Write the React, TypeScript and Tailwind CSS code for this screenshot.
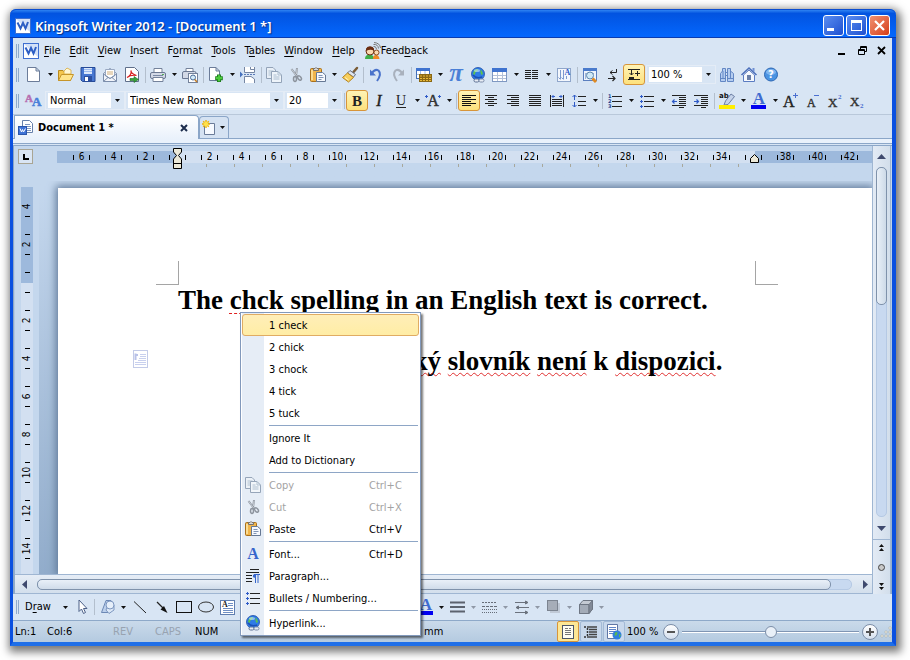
import { useState, type ReactNode } from 'react';
import clsx from 'clsx';

const serif = 'Liberation Serif';

const Globe = () => (
  <>
    <circle cx="8" cy="7" r="6.5" fill="#2f7be6" stroke="#1d4da6" strokeWidth=".8" />
    <path d="M4 3.5Q6 1.5 8 2L7.5 4 5.5 5.5 4.5 8 3 7Z M10.5 2.5 12 4 13 7 11.5 8 10.5 6Z" fill="#5cc24f" />
    <path d="M3 8Q6 12 12 10" stroke="#1a50b8" strokeWidth="1.5" fill="none" />
    <ellipse cx="7" cy="3.5" rx="3" ry="1.5" fill="#c9e5ff" opacity=".6" />
    <rect x="4" y="12" width="5" height="3" rx="1.5" fill="#e7ecf4" stroke="#5b6f92" />
    <rect x="9" y="12" width="5" height="3" rx="1.5" fill="#e7ecf4" stroke="#7b8ba8" />
  </>
);

const Sheet = ({ x = 2, y = 1, w = 11, h = 14 }) => (
  <path
    d={`M${x + 0.5} ${y + 0.5}H${x + w - 4}L${x + w - 0.5} ${y + 4}V${y + h - 0.5}H${x + 0.5}Z M${x + w - 4} ${y + 0.5}V${y + 4}H${x + w - 0.5}`}
    fill="#fff"
    stroke="#6b7c99"
  />
);

const Logo = () => (
  <>
    <rect width="16" height="16" fill="#3f6fd0" />
    <rect x="1" y="1" width="14" height="14" fill="#fff" />
    <path d="M1 1H15V14Z" fill="#d3e1f8" />
    <path d="M2.500 4.500 5.500 10.500 8 5 10.500 10.500 13 4" fill="none" stroke="#2e5fc4" strokeWidth="2" />
  </>
);

const bars = (rows: [number, number, number][], color = '#222') =>
  rows.map(([x, y, w], i) => <rect key={i} x={x} y={y} width={w} height="1" fill={color} />);

const Plus = ({ x, y }: { x: number; y: number }) => (
  <path d={`M${x} ${y - 1.5}v3M${x - 1.5} ${y}h3`} stroke="#2f5bc8" />
);

const icons: Record<string, ReactNode> = {
  logo: <Logo />,
  new: <Sheet x={1} y={0} w={13} h={15} />,
  open: (
    <>
      <path d="M.5 13.5V3.5H5L6.5 5H12.5V13.5Z" fill="#f4c64e" stroke="#b98a1e" />
      <path d="M6 4 9 1 13 3V7H6Z" fill="#fff7d6" stroke="#d6a837" strokeWidth=".8" />
      <path d="M.5 13.5 3.5 7.5H15.5L12.5 13.5Z" fill="#ffe48b" stroke="#c6952a" />
    </>
  ),
  save: (
    <>
      <path d="M1 .5H15V14.5H2.5L1 13Z" fill="#4777d2" stroke="#274b97" />
      <rect x="4" y="1" width="8" height="6" fill="#dce8fb" />
      <path d="M4 2.5h8M4 4.5h8" stroke="#9dbbee" />
      <rect x="4" y="9" width="8" height="5" fill="#2c4f9f" />
      <rect x="5" y="10" width="3" height="4" fill="#fff" />
    </>
  ),
  mail: (
    <>
      <path d="M1.5 6.5 8 1.5 14.5 6.5V14.5H1.5Z" fill="#f2f5fb" stroke="#7c8eab" />
      <path d="M3.5 2.5H12.5V9L8 11.5 3.5 9Z" fill="#fff" stroke="#9aa9c2" />
      <path d="M1.5 7 8 11.5 14.5 7M1.5 14.5 6 10.5M14.5 14.5 10 10.5" fill="none" stroke="#7c8eab" />
      <path d="M5 5h6M5 7h6" stroke="#cfae7a" />
    </>
  ),
  pdf: (
    <>
      <path d="M1.5.5H10.5L14.5 4.5V14.5H1.5Z" fill="#fff" stroke="#5f6f8a" />
      <path d="M3 10.5Q8 8 7 3.5Q7 7 12.5 8.5Q7 7.5 3 10.5Z" fill="none" stroke="#d81e1e" strokeWidth="1.2" />
      <path d="M6 11.5H10V9.5L14.5 12.5 10 15.5V13.5H6Z" fill="#38a23c" stroke="#1e6d22" strokeWidth=".6" />
    </>
  ),
  print: (
    <>
      <path d="M4 6V1.5H12V6" fill="#fff" stroke="#74829b" />
      <rect x=".5" y="5.5" width="15" height="6" rx="1.5" fill="#d3d9e6" stroke="#6b7892" />
      <path d="M3 10.5H13V14.5H3Z" fill="#fff" stroke="#74829b" />
      <path d="M3 8.5H13" stroke="#7a88a3" />
      <rect x="12" y="7" width="2" height="1" fill="#54b054" />
    </>
  ),
  preview: (
    <>
      <path d="M4 5V1.5H11V5" fill="#fff" stroke="#74829b" />
      <path d="M.5 6Q.5 4.5 2 4.5H12.5Q14 4.5 14 6V11.5H.5Z" fill="#d3d9e6" stroke="#6b7892" />
      <rect x="6.5" y="6.5" width="9" height="9" fill="#fff" stroke="#74829b" />
      <circle cx="11" cy="10.5" r="2.5" fill="#d4edfb" stroke="#4a6b98" />
      <path d="M12.8 12.5 15 15" stroke="#c17c26" strokeWidth="1.6" />
    </>
  ),
  pageplus: (
    <>
      <Sheet x={1} y={0} w={11} h={14} />
      <path d="M11 7.5V15M7.2 11.2H14.8" stroke="#1c7d1c" strokeWidth="4" />
      <path d="M11 8.3V14.2M8 11.2H14" stroke="#4ccc3c" strokeWidth="2.2" />
    </>
  ),
  pagebreak: (
    <>
      <path d="M4.500 0V5.500H14.500V0M10.500 0V2.500H14.500" fill="#fff" stroke="#7586a3" />
      <path d="M4.500 16V9.500H11L14.500 12V16" fill="#fff" stroke="#7586a3" />
      <path d="M0 4.500 3 7.500 0 10.500Z" fill="#4671bd" />
      <path d="M4 7.500H15" stroke="#5a79b8" strokeDasharray="2 1" />
    </>
  ),
  copy: (
    <g opacity=".75">
      <path d="M.5.500H7L9.500 3V11.500H.5Z" fill="#eef3f8" stroke="#7c8ea5" />
      <path d="M2.500 4h5M2.500 6h3M2.500 8h3" stroke="#9eb3c4" />
      <path d="M5.500 4.500H12L15.500 8V15.500H5.500Z" fill="#f6f9fc" stroke="#7c8ea5" />
      <path d="M12 4.500V8H15.500M7.500 8h3M7.500 10h6M7.500 12h6" stroke="#9eb3c4" fill="none" />
    </g>
  ),
  cut: (
    <g fill="none" stroke="#8d949e">
      <path d="M3.500 2 9.500 10M9 1 8 9" strokeWidth="2" />
      <path d="M3.500 2 8.500 9M9 1.500 8.500 7" stroke="#c6ccd4" />
      <ellipse cx="7" cy="12" rx="1.500" ry="2.400" strokeWidth="1.500" />
      <ellipse cx="11.500" cy="11" rx="1.500" ry="2.400" strokeWidth="1.500" transform="rotate(-40 11.500 11)" />
    </g>
  ),
  paste: (
    <>
      <rect x=".5" y="1.500" width="11" height="13" rx="1" fill="#f1b54b" stroke="#a8701c" />
      <path d="M2 3V13" stroke="#fbdc92" strokeWidth="2" />
      <path d="M3.500 3.500V1.500H5Q6-.5 7 1.500H8.500V3.500Z" fill="#d8d8d8" stroke="#77716a" />
      <path d="M6.500 5.500H12.500L15.500 8V14.500H6.500Z" fill="#f6f9fe" stroke="#667894" />
      <path d="M8.500 8.500h4M8.500 10.500h5M8.500 12.500h3" stroke="#8195b5" />
    </>
  ),
  brush: (
    <>
      <path d="M15 1 11.500 5" stroke="#7b5c36" strokeWidth="2.500" strokeLinecap="round" />
      <path d="M8 3.500 13.500 7.500 11.500 10 5.500 6Z" fill="#dfe4ec" stroke="#646e80" />
      <path d="M5.500 6 11.500 10.500 6.500 15 .5 10.500Z" fill="#f8cf5b" stroke="#b48322" />
      <path d="M3 10.500 6.500 13" stroke="#fff1b8" />
    </>
  ),
  undo: (
    <>
      <path d="M4 6Q7 1.500 10.500 3.500 14 7 9 14" fill="none" stroke="#4a73cb" strokeWidth="2" />
      <path d="M2 2.500V8.500H8Z" fill="#4a73cb" />
    </>
  ),
  redo: (
    <>
      <path d="M12 6Q9 1.500 5.500 3.500 2 7 7 14" fill="none" stroke="#a9b1bd" strokeWidth="2" />
      <path d="M14 2.500V8.500H8Z" fill="#a9b1bd" />
    </>
  ),
  goldtable: (
    <>
      <rect x=".5" y="1.500" width="13" height="10" fill="#fff" stroke="#4470b8" />
      <rect x="0" y="1" width="14" height="3" fill="#3f73cf" />
      <path d="M4.500 4V11M9 4V11M1 7.500H13" stroke="#a6bfe4" />
      <rect x="3" y="7" width="13" height="8" fill="#8a6814" />
      <path d="M4 9h11M4 11.500h11M4 13.500h11" stroke="#e9b93a" strokeDasharray="2 1" />
    </>
  ),
  pi: (
    <text x="8" y="14" textAnchor="middle" fontFamily={serif} fontWeight="bold" fontStyle="italic" fontSize="25" fill="#4a7fd6">π</text>
  ),
  globe: <Globe />,
  table: (
    <>
      <rect x=".5" y="1.500" width="14" height="13" fill="#fff" stroke="#7f98c2" />
      <rect x="0" y="1" width="15" height="4" fill="#3f73cf" />
      <path d="M5.500 5V14M10.500 5V14M1 8.500H14M1 11.500H14" stroke="#b3c1d8" />
    </>
  ),
  columns: bars([[1, 3, 6], [8, 3, 6], [1, 5, 6], [8, 5, 6], [1, 7, 6], [8, 7, 6], [1, 9, 6], [8, 9, 6], [1, 11, 6], [8, 11, 6]]),
  textdir: (
    <>
      <rect x="1.500" y="1.500" width="13" height="13" fill="#f3f7fd" stroke="#8fa6cb" />
      <path d="M4.500 3V12M7.500 3V12M10.500 9V12M2.500 10.500 4.500 12.500M5.500 10.500 7.500 12.500" stroke="#7c9ad0" fill="none" />
      <text x="11.500" y="8" textAnchor="middle" fontFamily={serif} fontWeight="bold" fontSize="8" fill="#2f5bc8">A</text>
    </>
  ),
  research: (
    <>
      <rect x="1.500" y="1.500" width="13" height="12" fill="#eef4fc" stroke="#5b7fbf" />
      <rect x="1" y="1" width="14" height="3" fill="#4a7bcc" />
      <path d="M3.500 6V12M3 6.500h9" stroke="#9fb5d8" />
      <circle cx="8" cy="8.500" r="3.500" fill="#cfe9f7" stroke="#5d87ae" />
      <path d="M10.500 11.500 14 15" stroke="#e08a22" strokeWidth="3" />
    </>
  ),
  marks: (
    <g fill="none" stroke="#222">
      <path d="M12.500 2V5.500H6M8.500 3.500 6 5.500 8.500 7.500" />
      <path d="M4 11.500H11M8.500 9 11 11.500 8.500 14" strokeWidth="1.200" />
    </g>
  ),
  rulers: (
    <>
      <path d="M2 2.500H14M2 12.500H14" stroke="#222" />
      <path d="M5.500 3V8M3.500 6 5.500 8 7.500 6M11.500 4V9M9 6.500H14" stroke="#222" fill="none" />
      <rect x="3" y="10" width="5" height="2" fill="#222" />
    </>
  ),
  find: (
    <g fill="#b5cdf0" stroke="#6387c4">
      <path d="M1.500 14.500V6.500L3.500 4V1.500H6.500V14.500ZM8.500 14.500V1.500H11.500V4L14.500 6.500V14.500Z" />
      <path d="M6.500 5.500h2M6.500 8.500h2M1.500 11.500h5M8.500 11.500h6M4 4V11M11.500 4V11" />
    </g>
  ),
  home: (
    <>
      <path d="M2.500 8V14.500H13.500V8L8 3Z" fill="#f5f8fd" stroke="#5b7cc2" />
      <path d="M11.500 1h2V5l-2-2Z" fill="#6e8fd3" />
      <path d="M.5 8 8 1 15.500 8" fill="none" stroke="#4d70bb" strokeWidth="1.600" />
      <rect x="6" y="8" width="4" height="5" fill="#6a7fa8" />
    </>
  ),
  help: (
    <>
      <circle cx="8" cy="7.500" r="6.500" fill="#4a93e2" stroke="#2c67b4" />
      <ellipse cx="8" cy="5" rx="5" ry="3" fill="#7fb6f0" />
      <text x="8" y="11" textAnchor="middle" fontFamily="DejaVu Sans" fontWeight="bold" fontSize="10" fill="#fff">?</text>
    </>
  ),
  styles: (
    <g fontFamily={serif} fontWeight="bold" strokeWidth=".5">
      <text x="-1" y="9" fontSize="11" fill="#b76fb2" stroke="#b76fb2">A</text>
      <text x="6" y="13" fontSize="13" fill="#4a80d9" stroke="#4a80d9">A</text>
    </g>
  ),
  bold: <text x="8" y="13" textAnchor="middle" fontFamily={serif} fontWeight="bold" fontSize="15" fill="#222">B</text>,
  italic: <text x="8" y="13" textAnchor="middle" fontFamily={serif} fontStyle="italic" fontSize="16" stroke="#222" strokeWidth=".4" fill="#222">I</text>,
  underline: (
    <>
      <text x="8" y="12" textAnchor="middle" fontFamily={serif} fontSize="14" fill="#222">U</text>
      <rect x="3" y="14" width="10" height="1" fill="#222" />
    </>
  ),
  scale: (
    <>
      <text x="8" y="13" textAnchor="middle" fontFamily={serif} fontSize="16" stroke="#333" strokeWidth=".5" fill="#333">A</text>
      <Plus x={1.5} y={3.5} />
      <Plus x={14.5} y={3.5} />
    </>
  ),
  left: bars([[1, 2, 14], [1, 4, 9], [1, 6, 14], [1, 8, 9], [1, 10, 14], [1, 12, 9]], '#111'),
  center: bars([[2, 2, 12], [5, 4, 6], [2, 6, 12], [5, 8, 6], [2, 10, 12], [5, 12, 6]]),
  right: bars([[2, 2, 12], [6, 4, 8], [2, 6, 12], [6, 8, 8], [2, 10, 12], [6, 12, 8]]),
  justify: bars([[2, 2, 12], [2, 4, 12], [2, 6, 12], [2, 8, 12], [2, 10, 12], [2, 12, 12]]),
  distribute: (
    <>
      {bars([[3, 6, 10], [3, 8, 10], [3, 10, 10], [3, 12, 10]])}
      <path d="M1.500 2V14M14.500 2V14" stroke="#222" />
      <path d="M3 3.500H6M10 3.500H13M4.500 2 3 3.500 4.500 5M11.500 2 13 3.500 11.500 5" stroke="#2f5bc8" fill="none" />
    </>
  ),
  spacing: (
    <>
      {bars([[7, 3, 8], [7, 8, 8], [7, 12, 8]])}
      <path d="M3.500 2V7M3.500 9V14M1.500 4 3.500 2 5.500 4M1.500 12 3.500 14 5.500 12" stroke="#2f5bc8" fill="none" />
    </>
  ),
  numbers: (
    <>
      {bars([[5, 3, 10], [5, 8, 10], [5, 13, 10]])}
      <g fontFamily="DejaVu Sans" fontWeight="bold" fontSize="5" fill="#23408f">
        <text x="1" y="5">1</text>
        <text x="1" y="10">2</text>
        <text x="1" y="15">3</text>
      </g>
    </>
  ),
  bullets: (
    <>
      {bars([[5, 3, 10], [5, 8, 10], [5, 13, 10]])}
      <Plus x={2.5} y={3.5} />
      <Plus x={2.5} y={8.5} />
      <Plus x={2.5} y={13.5} />
    </>
  ),
  outdent: (
    <>
      {bars([[1, 2, 14], [8, 4, 7], [8, 6, 7], [8, 8, 7], [8, 10, 7], [1, 12, 14], [8, 14, 5]])}
      <path d="M1 8.500H6M3.500 6.500 1.500 8.500 3.500 10.500" stroke="#2f5bc8" strokeWidth="1.200" fill="none" />
    </>
  ),
  indent: (
    <>
      {bars([[1, 2, 14], [8, 4, 7], [8, 6, 7], [8, 8, 7], [8, 10, 7], [1, 12, 14], [8, 14, 5]])}
      <path d="M1 8.500H6M3.500 6.500 5.500 8.500 3.500 10.500" stroke="#2f5bc8" strokeWidth="1.200" fill="none" />
    </>
  ),
  highlight: (
    <>
      <text x="0" y="5" fontFamily="DejaVu Sans" fontWeight="bold" fontSize="7" fill="#111">ab</text>
      <path d="M12 1 15.500 3.500 9 11.500 5 12 6.500 8Z" fill="#c6d4ea" stroke="#6c7fa5" />
      <rect x="0" y="12" width="16" height="4" fill="#ffee00" />
    </>
  ),
  fontcolor: (
    <>
      <text x="8" y="11" textAnchor="middle" fontFamily={serif} fontWeight="bold" fontSize="17" fill="#3f6bd0">A</text>
      <rect x="0" y="12" width="15" height="4" fill="#0000f0" />
    </>
  ),
  grow: (
    <>
      <text x="0" y="14" fontFamily={serif} fontSize="16" stroke="#222" strokeWidth=".4" fill="#222">A</text>
      <path d="M12.500 0V5M10 2.500H15" stroke="#4a6fd0" />
    </>
  ),
  shrink: (
    <>
      <text x="2" y="14" fontFamily={serif} fontSize="12" stroke="#333" strokeWidth=".4" fill="#333">A</text>
      <path d="M9 2.500H14" stroke="#4a6fd0" />
    </>
  ),
  sup: (
    <g fontFamily={serif}>
      <text x="1" y="14" fontSize="13" stroke="#333" strokeWidth=".4" fill="#333">X</text>
      <text x="11" y="6" fontSize="7" fontWeight="bold" fill="#4a6fd0">2</text>
    </g>
  ),
  sub: (
    <g fontFamily={serif}>
      <text x="1" y="13" fontSize="13" stroke="#333" strokeWidth=".4" fill="#333">X</text>
      <text x="11" y="15" fontSize="7" fontWeight="bold" fill="#4a6fd0">2</text>
    </g>
  ),
  pointer: <path d="M5 1V12.500L7.500 10 9.500 14.500 11.500 13.500 9.500 9.500H13Z" fill="#fff" stroke="#4b5f87" />,
  shapes: (
    <>
      <path d="M6 1.500H11L8 13.500H1.500Z" fill="#bcd0ec" stroke="#6c88b5" />
      <path d="M9 4 14 6V11L9 14.500 6 11Z" fill="#dce8f7" stroke="#7d97c0" />
      <circle cx="10" cy="6" r="4" fill="#e6effa" stroke="#7d97c0" />
    </>
  ),
  line: <path d="M2 2.500 14 14" stroke="#222" />,
  arrow: (
    <>
      <path d="M3 3 10 10" stroke="#222" strokeWidth="1.300" />
      <path d="M13.500 14 6.500 10.500 10 7Z" fill="#111" />
    </>
  ),
  rect: <rect x=".5" y="2.500" width="15" height="11" fill="none" stroke="#111" />,
  ellipse: <ellipse cx="8" cy="8" rx="7.500" ry="5" fill="none" stroke="#333" />,
  textbox: (
    <>
      <rect x=".5" y="1.500" width="14" height="14" fill="#fff" stroke="#5f7eb0" />
      <text x="2" y="8" fontFamily={serif} fontWeight="bold" fontSize="8" fill="#222">A</text>
      {bars([[8, 4, 5], [8, 6, 5], [3, 9, 10], [3, 11, 10], [3, 13, 10]], '#6f8fc4')}
    </>
  ),
  weight: <path d="M0 3.500H15M0 8H15M0 12.500H15" stroke="#5c636e" strokeWidth="2" />,
  dash: (
    <g stroke="#666d78">
      <path d="M0 3.500H15" strokeDasharray="2 1" />
      <path d="M0 7.500H15" strokeDasharray="3 1" />
      <path d="M0 10.500H15M0 13.500H15" strokeDasharray="1 1" />
    </g>
  ),
  arrows: (
    <g stroke="#6b727d" fill="none">
      <path d="M1 3.500H14M2 8.500H15M1 13.500H14" />
      <path d="M11.500 2 14 3.500 11.500 5ZM4.500 7 2 8.500 4.500 10ZM11.500 12 14 13.500 11.500 15Z" fill="#6b727d" />
    </g>
  ),
  shadow: (
    <>
      <rect x="4" y="4" width="10" height="10" fill="#c0c9d6" />
      <rect x="1.500" y="1.500" width="10" height="10" fill="#a6adb8" stroke="#7c8490" />
    </>
  ),
  cube: (
    <g stroke="#6e7683">
      <path d="M1.500 5.500 5 1.500H14.500V10L11 14.500H1.500Z" fill="#c4cad3" />
      <path d="M1.500 5.500H11V14.500H1.500Z" fill="#a3abb7" />
      <path d="M11 5.500 14.500 1.500V10L11 14.500Z" fill="#828a97" />
    </g>
  ),
  font: <text x="8" y="13" textAnchor="middle" fontFamily={serif} fontWeight="bold" fontSize="16" fill="#3766cc">A</text>,
  paragraph: (
    <>
      {bars([[5, 1, 9], [1, 4, 13], [1, 7, 6], [1, 10, 6], [1, 13, 6]])}
      <path d="M10.500 6V15M13 6V15M9 6.500H15" stroke="#3766cc" />
      <circle cx="9.500" cy="8" r="1.700" fill="#3766cc" />
    </>
  ),
  pageview: (
    <>
      <rect x="2.500" y="1.500" width="11" height="13" fill="#fffdf0" stroke="#4c5666" />
      {bars([[5, 4, 3], [9, 4, 2], [5, 6, 6], [5, 8, 6], [5, 10, 6]], '#777')}
    </>
  ),
  outline: (
    <>
      <path d="M4 3H14M6 5.500H14M6 8H14M6 10.500H14M4 13H14" stroke="#444" strokeWidth="1.300" />
      <path d="M1 3h2M1 13h2M4.500 4V12" stroke="#333" strokeWidth="1.500" strokeDasharray="2 1" />
    </>
  ),
  webview: (
    <>
      <path d="M1.500.500H11.500V14.500H1.500Z" fill="#fff" stroke="#5f77a5" />
      {bars([[3, 3, 7], [3, 5, 7], [3, 7, 7], [3, 9, 4]], '#5f86c8')}
      <circle cx="11" cy="11" r="4.500" fill="#2f7fe0" />
      <path d="M9 8.500 11.500 8 11 11 8.500 12ZM13 10l2 1-2 3Z" fill="#59b950" />
    </>
  ),
  feedback: (
    <>
      <path d="M0 16Q0 11.500 4.500 11.500T9 16Z" fill="#3fae49" />
      <path d="M8 16Q8 12 11 12T14.500 16Z" fill="#f08a24" />
      <circle cx="5" cy="8" r="4" fill="#fbd9b0" stroke="#6b2d12" />
      <path d="M1 8Q1 3 5 3.500 9 3 9 8 6 5.500 1 8Z" fill="#6b2d12" />
      <circle cx="11.500" cy="9.500" r="2.500" fill="#fbd9b0" stroke="#8a4a1e" />
      <path d="M8.500 3.500Q11 3 11.500 6M8.500 1.500Q13 1 13.500 5.500M9-.5Q15 0 15.500 5" stroke="#777" fill="none" />
    </>
  ),
  doctab: (
    <>
      <path d="M4.500.500H11.500L14.500 3.500V12.500H4.500Z" fill="#fff" stroke="#6680ab" />
      {bars([[7, 4, 5], [7, 6, 6], [7, 8, 6], [9, 10, 4]], '#7f97c0')}
      <rect x=".5" y="6.500" width="8" height="8" fill="#3f73d6" stroke="#2b56ab" />
      <path d="M2 8.500 3.500 12 4.500 9.500 5.500 12 7.500 8.500" stroke="#fff" fill="none" />
    </>
  ),
  newtab: (
    <>
      <path d="M2.500 3.500H12.500V14.500H2.500Z" fill="#f7faff" stroke="#6b7c99" />
      <path d="M4 0V8M0 4H8M1.200 1.200 6.800 6.800M6.800 1.200 1.200 6.800" stroke="#f0b400" strokeWidth="1.400" />
      <circle cx="4" cy="4" r="2.200" fill="#ffe14a" />
    </>
  ),
};

const Icon = ({ name }: { name: string }) => (
  <svg width="16" height="16" viewBox="0 0 16 16" className="shrink-0 overflow-visible" aria-hidden="true">
    {icons[name]}
  </svg>
);

const Caret = ({ dim = false }) => (
  <svg width="5" height="3" viewBox="0 0 5 3" className="shrink-0" aria-hidden="true">
    <path d="M0 0H5L2.500 3Z" fill={dim ? '#8f98a6' : '#111'} />
  </svg>
);

const Grip = () => <span className="mr-1 ml-[3px] h-3.5 w-[3px] shrink-0 border-x border-[#8ea9cb]" />;

const Divider = () => (
  <span className="flex w-1 shrink-0 justify-center">
    <span className="h-4 w-px bg-[#b3bfcd]" />
  </span>
);

// 'v' is a drop-down arrow, 'd' the same greyed out, '|' a divider
function Tools({ items, active = [] }: { items: string; active?: string[] }) {
  return (
    <>
      {items.split(' ').map((name, i) => {
        if (name === '|') return <Divider key={i} />;
        if (name === 'v' || name === 'd')
          return (
            <button key={i} aria-label="More" className="flex h-[22px] w-2.5 shrink-0 items-center justify-center">
              <Caret dim={name === 'd'} />
            </button>
          );
        return (
          <button
            key={i}
            aria-label={name}
            className={clsx(
              'flex h-[21px] w-[22px] shrink-0 items-center justify-center rounded-[3px] border',
              active.includes(name)
                ? 'border-[#d7953a] bg-linear-to-b from-[#fff3b5] to-[#fde17c]'
                : 'border-transparent'
            )}
          >
            <Icon name={name} />
          </button>
        );
      })}
    </>
  );
}

function Combo({ label, value, className }: { label: string; value: string; className: string }) {
  return (
    <label className={clsx('flex h-[19px] shrink-0 items-center border border-[#e4ecf6] pl-0.5', className)}>
      <select aria-label={label} defaultValue={value} className="h-[15px] min-w-0 flex-1 appearance-none bg-white pl-0.5 text-[11px] leading-[15px] outline-none">
        <option>{value}</option>
      </select>
      <span className="flex w-[13px] justify-center">
        <Caret />
      </span>
    </label>
  );
}

const mnemonic = (text: string) => {
  const at = text.indexOf('_');
  if (at < 0) return text;
  return (
    <>
      {text.slice(0, at)}
      <u className="underline-offset-2">{text[at + 1]}</u>
      {text.slice(at + 2)}
    </>
  );
};

function TitleBar() {
  const button = 'flex size-[21px] items-center justify-center rounded-[3px] border border-white';
  return (
    <header className="flex h-[29px] items-center rounded-t-md bg-linear-to-b from-[#3b90f7] via-[#0253e0] via-15% to-[#0468ff] pt-1 pr-1.5 pl-[5px] shadow-[inset_0_1px_0_#0a4cd0,inset_0_-1px_0_#0a3cb0]">
      <Icon name="logo" />
      <h1 className="ml-1 flex-1 font-['Noto_Sans'] text-[13px] font-semibold text-white [text-shadow:1px_1px_1px_#0a2f80]">
        Kingsoft Writer 2012 - [Document 1 *]
      </h1>
      <div className="flex gap-0.5">
        <button aria-label="Minimize" className={clsx(button, 'bg-linear-to-br from-[#5b8df0] to-[#1f4fd0]')}>
          <span className="mt-2 mr-1.5 h-[3px] w-[7px] bg-white" />
        </button>
        <button aria-label="Maximize" className={clsx(button, 'bg-linear-to-br from-[#5b8df0] to-[#1f4fd0]')}>
          <span className="size-[11px] border border-t-[3px] border-white" />
        </button>
        <button aria-label="Close" className={clsx(button, 'bg-linear-to-br from-[#f09070] to-[#d43a10]')}>
          <svg width="11" height="11" viewBox="0 0 11 11">
            <path d="M1 1 10 10M10 1 1 10" stroke="#fff" strokeWidth="2.200" />
          </svg>
        </button>
      </div>
    </header>
  );
}

const menus = ['_File', '_Edit', '_View', '_Insert', 'F_ormat', '_Tools', 'T_ables', '_Window', '_Help'];

function MenuBar() {
  return (
    <nav className="flex h-6 items-center pt-px">
      <Grip />
      <Icon name="logo" />
      <div className="flex gap-px pl-px">
        {menus.map(m => (
          <button key={m} className="px-1">{mnemonic(m)}</button>
        ))}
      </div>
      <button className="ml-1.5 flex items-center">
        <Icon name="feedback" />
        <span>{mnemonic('Feed_back')}</span>
      </button>
      <div className="ml-auto flex items-center gap-2.5 pr-1.5">
        <button aria-label="Minimize document" className="flex h-3 w-2.5 items-end pb-0.5">
          <span className="h-0.5 w-[7px] bg-black" />
        </button>
        <button aria-label="Restore document">
          <svg width="9" height="9" viewBox="0 0 9 9" fill="none" stroke="#000">
            <path d="M2.500 3V.5H8.500V5.500H6M2 1.500H9M.5 3.500H6.500V8.500H.5ZM0 4.500H7" />
          </svg>
        </button>
        <button aria-label="Close document">
          <svg width="9" height="9" viewBox="0 0 9 9">
            <path d="M1 1 8 8M8 1 1 8" stroke="#000" strokeWidth="1.800" />
          </svg>
        </button>
      </div>
    </nav>
  );
}

function Tabs() {
  return (
    <div className="border-t border-[#b9c8da] bg-[#d5e2f2]">
      <div className="flex h-6 items-end border-b border-[#8ba6c8] pl-px">
        <div className="-mb-px flex h-6 w-[185px] items-center rounded-tr border border-b-0 border-[#8ba6c8] bg-linear-to-b from-white to-[#e9f1fb] pr-2.5 pl-[3px]">
          <Icon name="doctab" />
          <span className="ml-1 flex-1 font-bold">Document 1 *</span>
          <button aria-label="Close tab">
            <svg width="8" height="8" viewBox="0 0 8 8">
              <path d="M1 1 7 7M7 1 1 7" stroke="#1b2c4c" strokeWidth="2" />
            </svg>
          </button>
        </div>
        <button aria-label="New tab" className="flex h-[22px] w-[30px] items-center justify-center gap-0.5 rounded-t border border-b-0 border-[#8ba6c8] pr-0.5">
          <Icon name="newtab" />
          <Caret />
        </button>
      </div>
      <div className="h-[5px] border-b border-[#8ba6c8] bg-[#e9f1fb]" />
    </div>
  );
}

const hLabels = Array.from({ length: 25 }, (_, i) => Math.abs(i * 2 - 6));
const vLabels = [4, 2, 0, 2, 4, 6, 8, 10, 12, 14];
const tabStops = Array.from({ length: 20 }, (_, i) => i);

function HorizontalRuler() {
  return (
    <div className="flex h-9 shrink-0 pl-[3px]">
      <button aria-label="Tab type" className="mt-[3px] flex size-[15px] items-center justify-center border border-[#a9a594] bg-[#d9e5f4]">
        <svg width="6" height="6" viewBox="0 0 6 6">
          <path d="M1 0V5H6" fill="none" stroke="#000" strokeWidth="2" />
        </svg>
      </button>
      <div className="relative mt-[5px] ml-6 flex-1 overflow-x-clip">
        <div className="flex h-3 bg-[linear-gradient(to_right,#9db9dc_120px,#d3e0f1_120px,#d3e0f1_698px,#9db9dc_698px)] pl-2">
          {hLabels.map((n, i) => (
            <span key={i} className="flex w-8 shrink-0 items-center pl-2">
              <i className="h-[5px] w-px bg-black" />
              <b className="flex w-[15px] justify-center text-[10px] leading-3 font-normal">{n === 0 || n === 36 ? '' : n}</b>
              <i className="h-[5px] w-px bg-black" />
            </span>
          ))}
        </div>
        <div className="mt-px flex gap-[27px] pl-[149px]">
          {tabStops.map(n => (
            <i key={n} className="h-[3px] w-px shrink-0 bg-[#a8a79b]" />
          ))}
        </div>
        {/* first-line, hanging and right indent markers */}
        <svg width="10" height="21" viewBox="0 0 10 21" className="absolute -top-[3px] left-[116px]" fill="#ece9d8" stroke="#000">
          <path d="M.5.500H8.500V4L5.500 7.500 8.500 11V20.500H.5V11L3.500 7.500.5 4ZM.5 15.500H8.500" />
        </svg>
        <svg width="10" height="10" viewBox="0 0 10 10" className="absolute top-[3px] left-[693px]" fill="#ece9d8" stroke="#000">
          <path d="M.5 8.500V4.500L4.500.500 8.500 4.500V8.500Z" />
        </svg>
      </div>
    </div>
  );
}

function VerticalRuler() {
  return (
    <div className="flex w-6 shrink-0 justify-center bg-[#c4d7ed] pt-1.5">
      <div className="w-3 overflow-hidden bg-[linear-gradient(to_bottom,#9db9dc_96px,#d3e0f1_96px)]">
        {vLabels.map((n, i) => (
          <span key={i} className="flex h-[38px] flex-col items-center pt-[9px]">
            <i className={clsx('h-px w-[5px]', i ? 'bg-black' : 'bg-transparent')} />
            <b className="flex h-[19px] -rotate-90 items-center text-[10px] leading-3 font-normal">{n || ''}</b>
            <i className="h-px w-[5px] shrink-0 bg-black" />
          </span>
        ))}
      </div>
    </div>
  );
}

const misspelt = 'underline decoration-[#e03030] decoration-wavy decoration-1 underline-offset-2 [text-decoration-skip-ink:none]';

function Page() {
  return (
    <main className="relative ml-[19px] flex-1 overflow-hidden bg-white pt-[73px] font-['Liberation_Serif',serif] text-[27px] leading-[30px] font-bold whitespace-nowrap shadow-[0_0_8px_2px_#5f7898]">
      <div className="flex justify-between pr-[94px] pl-[98px]">
        <span className="h-6 w-[23px] border-r border-b border-[#a5a5a5]" />
        <span className="h-6 w-[23px] border-b border-l border-[#a5a5a5]" />
      </div>
      <p className="pl-[120px]">
        The{' '}
        <span className="underline decoration-[#e02020] decoration-dashed decoration-1 underline-offset-4">chck</span>{' '}
        spelling in an English text is correct.
      </p>
      <p className="mt-[31px] pl-[320px]">
        <span className={misspelt}>český</span> <span className={misspelt}>slovník</span>{' '}
        <span className={misspelt}>není</span> k <span className={misspelt}>dispozici</span>.
      </p>
      <svg width="15" height="18" viewBox="0 0 15 18" className="absolute top-[162px] left-[75px]">
        <rect x=".5" y=".5" width="14" height="17" fill="#fff" stroke="#c3cbe8" />
        <path d="M7 4.500h6M7 6.500h6M6 8.500h7M5 10.500h8M2 12.500h11M2 14.500h11" stroke="#c8d0ee" />
        <path d="M2.500 3.500V10M2 5h3" stroke="#b9c2e8" strokeWidth="2" />
      </svg>
    </main>
  );
}

function VerticalScroll() {
  return (
    <aside className="flex w-[19px] shrink-0 flex-col items-center border-x border-[#9fb6d2] bg-linear-to-r from-[#e3ebf5] to-[#d2deeb]">
      <button aria-label="Scroll up" className="flex h-[21px] items-center">
        <svg width="9" height="5" viewBox="0 0 9 5"><path d="M0 5H9L4.500 0Z" fill="#3f4a6e" /></svg>
      </button>
      <div className="w-[11px] flex-1 rounded-[5px] border border-[#b5c9e4] bg-[#c8d9f0]">
        <div className="-mx-px -mt-px h-[138px] rounded-[5px] border border-[#7f92ab] bg-linear-to-r from-[#e9f0f8] to-[#cddae8]" />
      </div>
      <button aria-label="Scroll down" className="flex h-[22px] items-center">
        <svg width="9" height="5" viewBox="0 0 9 5"><path d="M0 0H9L4.500 5Z" fill="#3f4a6e" /></svg>
      </button>
      <div className="flex h-[55px] w-full flex-col items-center justify-between border-t border-[#9fb6d2] py-1">
        <button aria-label="Previous page">
          <svg width="7" height="7" viewBox="0 0 7 7"><path d="M1 3H6L3.500 0ZM1 7H6L3.500 4Z" fill="#111" /></svg>
        </button>
        <button aria-label="Select browse object" className="size-[7px] rounded-full border border-[#444] bg-[#c9c9c9]" />
        <button aria-label="Next page">
          <svg width="7" height="7" viewBox="0 0 7 7"><path d="M1 0H6L3.500 3ZM1 4H6L3.500 7Z" fill="#111" /></svg>
        </button>
      </div>
    </aside>
  );
}

function HorizontalScroll() {
  return (
    <div className="flex h-5 shrink-0 items-center border-y border-[#9fb6d2] bg-linear-to-b from-[#e6edf6] to-[#d3dfec]">
      <button aria-label="Scroll left" className="flex w-[22px] justify-center pr-1">
        <svg width="5" height="9" viewBox="0 0 5 9"><path d="M5 0V9L0 4.500Z" fill="#3f4a6e" /></svg>
      </button>
      <div className="h-[11px] flex-1 rounded-[5px] border border-[#b5c9e4] bg-[#c8d9f0] pr-5">
        <div className="-mt-px -ml-px h-[11px] rounded-[5px] border border-[#7f92ab] bg-linear-to-b from-[#e9f0f8] to-[#d0dcea]" />
      </div>
      <button aria-label="Scroll right" className="flex w-5 justify-center pl-1.5">
        <svg width="5" height="9" viewBox="0 0 5 9"><path d="M0 0V9L5 4.500Z" fill="#3f4a6e" /></svg>
      </button>
    </div>
  );
}

function StatusBar() {
  const [zoom, setZoom] = useState(50);
  const view = 'flex h-[21px] w-[22px] items-center justify-center rounded-[2px] border';
  const round = 'flex size-4 shrink-0 items-center justify-center rounded-full border border-[#7c8ea8] bg-linear-to-b from-white to-[#d5e0ee]';
  return (
    <footer className="flex h-[22px] items-center border-t border-[#8ea9c9] bg-linear-to-b from-[#cadaea] to-[#b4cae0] pl-0.5">
      <span className="w-8">Ln:1</span>
      <span className="w-[66px]">Col:6</span>
      <span className="w-[42px] text-[#98a3b0]">REV</span>
      <span className="w-10 text-[#98a3b0]">CAPS</span>
      <span className="w-[229px]">NUM</span>
      <span className="flex-1">mm</span>
      <div className="flex gap-px">
        <button aria-label="Page layout" className={clsx(view, 'border-[#d7953a] bg-[#fde795]')}><Icon name="pageview" /></button>
        <button aria-label="Outline" className={clsx(view, 'border-[#a3bad6] bg-[#c9d9ec]')}><Icon name="outline" /></button>
        <button aria-label="Web layout" className={clsx(view, 'border-[#a3bad6] bg-[#c9d9ec]')}><Icon name="webview" /></button>
      </div>
      <span className="ml-0.5 w-9 shrink-0 whitespace-nowrap">100 %</span>
      <button aria-label="Zoom out" className={round} onClick={() => setZoom(zoom - 5)}>
        <span className="h-0.5 w-2 bg-[#555]" />
      </button>
      <input
        type="range"
        aria-label="Zoom"
        value={zoom}
        onChange={e => setZoom(Number(e.target.value))}
        className="mx-[3px] h-3 w-[177px] appearance-none bg-[linear-gradient(to_bottom,transparent_5px,#8095b3_5px,#8095b3_6px,#fff_6px,#fff_7px,transparent_7px)] [&::-webkit-slider-thumb]:size-3 [&::-webkit-slider-thumb]:appearance-none [&::-webkit-slider-thumb]:rounded-full [&::-webkit-slider-thumb]:border [&::-webkit-slider-thumb]:border-solid [&::-webkit-slider-thumb]:border-[#7c8ea8] [&::-webkit-slider-thumb]:bg-[#e9f0f8]"
      />
      <button aria-label="Zoom in" className={round} onClick={() => setZoom(zoom + 5)}>
        <svg width="8" height="8" viewBox="0 0 8 8"><path d="M4 0V8M0 4H8" stroke="#555" strokeWidth="2" /></svg>
      </button>
      <svg width="12" height="12" viewBox="0 0 12 12" className="ml-0.5 shrink-0" fill="#f4f4ee" stroke="#aaa99a" strokeWidth=".5">
        <path d="M9 1h2v2h-2zM5 5h2v2h-2zM9 5h2v2h-2zM1 9h2v2h-2zM5 9h2v2h-2zM9 9h2v2h-2z" />
      </svg>
    </footer>
  );
}

type Entry = { text: string; icon?: string; keys?: string; off?: boolean };

const contextMenu: Entry[][] = [
  [{ text: '1 check' }, { text: '2 chick' }, { text: '3 chock' }, { text: '4 tick' }, { text: '5 tuck' }],
  [{ text: 'Ignore It' }, { text: 'Add to Dictionary' }],
  [
    { text: 'Copy', icon: 'copy', keys: 'Ctrl+C', off: true },
    { text: 'Cut', icon: 'cut', keys: 'Ctrl+X', off: true },
    { text: 'Paste', icon: 'paste', keys: 'Ctrl+V' },
  ],
  [
    { text: 'Font...', icon: 'font', keys: 'Ctrl+D' },
    { text: 'Paragraph...', icon: 'paragraph' },
    { text: 'Bullets / Numbering...', icon: 'bullets' },
  ],
  [{ text: 'Hyperlink...', icon: 'globe' }],
];

function ContextMenu() {
  return (
    <div
      role="menu"
      className="absolute top-[303px] left-[230px] w-[181px] border border-[#8299bb] bg-[linear-gradient(to_right,#fff_1px,#e6edf6_1px,#e6edf6_23px,#fff_23px)] p-px shadow-[2px_2px_2px_#0008]"
    >
      {contextMenu.map((group, g) => (
        <div key={g}>
          {g > 0 && <div className="mt-px mr-px ml-[27px] h-0.5 border-t border-[#8ea6c6]" />}
          {group.map((entry, i) => (
            <button
              key={entry.text}
              role="menuitem"
              disabled={entry.off}
              className={clsx(
                'flex h-[22px] w-full items-center rounded-[3px] border pt-0.5 text-left',
                g === 0 && i === 0 ? 'border-[#e0ac63] bg-linear-to-b from-[#ffeeb8] to-[#ffeda5]' : 'border-transparent',
                entry.off && 'text-[#a3a3a3]'
              )}
            >
              <span className="flex w-[26px] shrink-0 pb-0.5 pl-0.5">{entry.icon && <Icon name={entry.icon} />}</span>
              <span className="flex-1 whitespace-nowrap">{entry.text}</span>
              {entry.keys && <span className="w-[49px]">{entry.keys}</span>}
            </button>
          ))}
        </div>
      ))}
    </div>
  );
}

export default function App() {
  return (
    <div className="flex min-h-screen flex-col bg-white pt-[9px] pr-3.5 pb-3.5 pl-2.5 font-['DejaVu_Sans_Condensed','DejaVu_Sans',sans-serif] text-[11px] leading-4 text-black">
      <div className="relative flex flex-1 flex-col rounded-t-md shadow-[2px_3px_9px_3px_#0008]">
        <TitleBar />
        <div className="flex flex-1 flex-col border-x-[3px] border-r-4 border-b-4 border-[#0a50e0] border-b-[#1f6fe8] bg-[#d8e5f4]">
          <MenuBar />
          <div className="flex h-[25px] items-center">
            <Grip />
            <Tools
              items="new v open save mail pdf | print v preview | pageplus v pagebreak | copy cut paste v brush | undo redo | goldtable v pi globe table v columns v textdir | research marks rulers"
              active={['rulers']}
            />
            <Combo label="Zoom level" value="100 %" className="ml-px w-[70px]" />
            <Tools items="find home help" />
          </div>
          <div className="flex h-[27px] items-center">
            <Grip />
            <Tools items="styles" />
            <Combo label="Style" value="Normal" className="w-20" />
            <Combo label="Font" value="Times New Roman" className="w-[159px]" />
            <Combo label="Font size" value="20" className="w-[58px]" />
            <Tools
              items="| bold italic underline v scale v | left center right justify distribute spacing v | numbers v bullets v outdent indent | highlight v fontcolor v grow shrink sup sub"
              active={['bold', 'left']}
            />
          </div>
          <Tabs />
          <div className="mt-px flex flex-1 border-t border-l border-[#8ba6c8] bg-linear-to-b from-[#c4d7ed] from-10% to-[#8faac9]">
            <div className="ml-px flex min-w-0 flex-1 flex-col">
              <HorizontalRuler />
              <div className="-mt-px flex flex-1 overflow-hidden">
                <VerticalRuler />
                <div className="flex flex-1 pt-[7px]">
                  <Page />
                </div>
              </div>
              <HorizontalScroll />
            </div>
            <VerticalScroll />
            <span className="w-px" />
          </div>
          <div className="flex h-[26px] items-center">
            <Grip />
            <button className="mr-2.5 ml-0.5">{mnemonic('D_raw')}</button>
            <Tools items="v pointer | shapes v line arrow rect ellipse textbox" />
            <div className="ml-44 flex">
              <Tools items="fontcolor v weight d dash d arrows d shadow d cube d" />
            </div>
          </div>
          <StatusBar />
        </div>
        <ContextMenu />
      </div>
    </div>
  );
}
